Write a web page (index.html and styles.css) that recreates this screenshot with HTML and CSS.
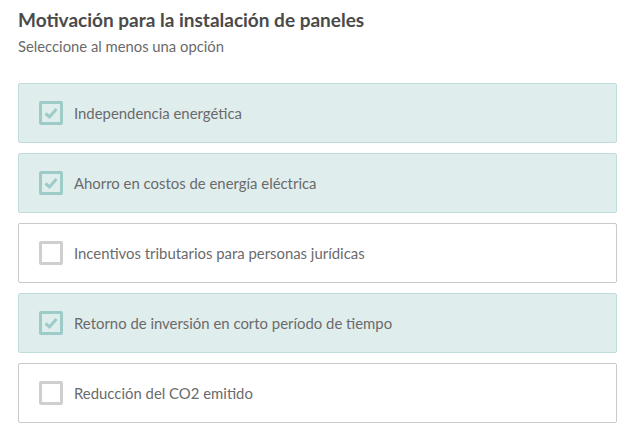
FILE: index.html
```html
<!DOCTYPE html>
<html lang="es">
<head>
<meta charset="utf-8">
<link rel="stylesheet" href="styles.css">
</head>
<body>
<div class="form">
  <h1 class="title">Motivación para la instalación de paneles</h1>
  <p class="hint">Seleccione al menos una opción</p>
  <div class="options">
    <label class="option checked"><span class="box"><svg viewBox="0 0 18 18"><path d="M3.5 9.5 L7.5 13 L14.5 5" /></svg></span><span class="text">Independencia energética</span></label>
    <label class="option checked"><span class="box"><svg viewBox="0 0 18 18"><path d="M3.5 9.5 L7.5 13 L14.5 5" /></svg></span><span class="text">Ahorro en costos de energía eléctrica</span></label>
    <label class="option"><span class="box"></span><span class="text">Incentivos tributarios para personas jurídicas</span></label>
    <label class="option checked"><span class="box"><svg viewBox="0 0 18 18"><path d="M3.5 9.5 L7.5 13 L14.5 5" /></svg></span><span class="text">Retorno de inversión en corto período de tiempo</span></label>
    <label class="option"><span class="box"></span><span class="text">Reducción del CO2 emitido</span></label>
  </div>
</div>
</body>
</html>
```

FILE: styles.css
```css
html, body {
  margin: 0;
  padding: 0;
  background: #ffffff;
}
body {
  font-family: Lato, "Open Sans", sans-serif;
  color: #4c4c4c;
}
.form {
  padding: 8px 13px 0 18px;
}
.title {
  margin: 0;
  font-size: 19px;
  line-height: 24px;
  font-weight: 700;
  color: #4a4a4a;
}
.hint {
  margin: 4px 0 0 0;
  font-size: 14.8px;
  line-height: 20px;
  color: #6a6a6a;
}
.options {
  margin-top: 27px;
  display: flex;
  flex-direction: column;
  gap: 10px;
}
.option {
  box-sizing: border-box;
  height: 60px;
  display: flex;
  align-items: center;
  padding-left: 20px;
  border: 1px solid #cacaca;
  background: #ffffff;
  border-radius: 2px;
}
.option.checked {
  background: #e0eded;
  border-color: #bfdedb;
}
.box {
  box-sizing: border-box;
  width: 24px;
  height: 24px;
  border: 3px solid #cfcfcf;
  border-radius: 2px;
  display: flex;
  align-items: center;
  justify-content: center;
  background: #ffffff;
}
.checked .box {
  border-color: #9dcbc8;
  background: #e0eded;
}
.box svg {
  width: 18px;
  height: 18px;
  fill: none;
  stroke: #9dcbc8;
  stroke-width: 3;
}
.text {
  margin-left: 11px;
  font-size: 14.9px;
  color: #6a6a6a;
}
```
